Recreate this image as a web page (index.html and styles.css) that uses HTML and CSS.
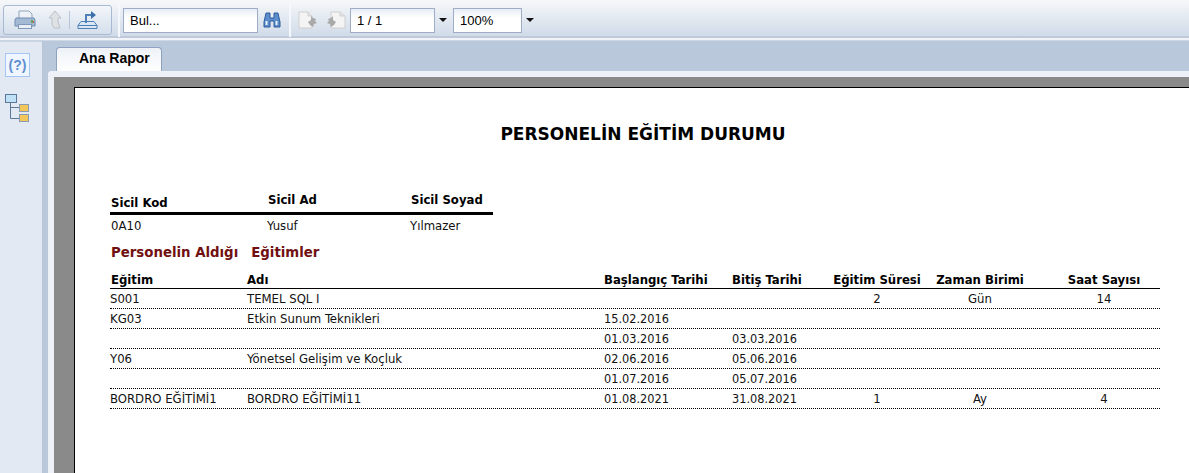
FILE: index.html
```html
<!DOCTYPE html>
<html lang="tr">
<head>
  <meta charset="UTF-8">
  <title>Personelin Eğitim Durumu</title>
  <link rel="stylesheet" href="styles.css">
</head>
<body>
  <!-- Toolbar -->
  <div class="toolbar">
    <div class="btn-group">
      <svg class="print-icon" width="22" height="20" viewBox="0 0 22 20"><path d="M5 1h10l3 3v5H5z" fill="#eef2f7" stroke="#8ea4c0"/><path d="M2 8h18l1 2v6H1v-6z" fill="#a4b9d4" stroke="#6f8cb0"/><rect x="4.500" y="14.500" width="13" height="4" fill="#e9eef5" stroke="#7f97b8"/><rect x="17" y="10" width="2" height="3" fill="#6aa35a"/><rect x="19" y="11" width="1" height="2" fill="#c9604a"/></svg>
      <svg class="up-icon" width="14" height="20" viewBox="0 0 14 20"><path d="M7 1l6 7h-3v4l2 6H6l-2-4V8H1z" fill="#dfe2e5" stroke="#bcc1c7"/></svg>
      <span class="btn-sep"></span>
      <svg class="send-icon" width="21" height="20" viewBox="0 0 21 20"><path d="M1 18.500v-3l3-4h13l3 4v3z" fill="#dce7f4" stroke="#4d80b8"/><path d="M1 15.500h19" stroke="#4d80b8"/><path d="M9 13V5h6" fill="none" stroke="#4d80b8" stroke-width="2"/><path d="M14 1l5 4-5 4z" fill="#3a70aa"/></svg>
    </div>
    <span class="tool-sep"></span>
    <input class="tool-input find-input" type="text" value="Bul...">
    <svg class="binoculars" width="18" height="16" viewBox="0 0 18 16"><path d="M3 1h4v5h4V1h4l2 9v5h-6V9H7v6H1v-5z" fill="#5d8ccb" stroke="#2c5c9e"/><path d="M3.500 9v4M13.500 9v4" stroke="#e6f0fb" stroke-width="2"/></svg>
    <span class="tool-sep"></span>
    <svg class="page-icon" width="20" height="18" viewBox="0 0 20 18"><path d="M1 1h9l4 4v12H1z" fill="#f4f4f4" stroke="#cfcfcf"/><path d="M10 1v4h4" fill="#e4e4e4" stroke="#cfcfcf"/><path d="M13 5l2 2 3 1-1 2 2 2-3 1-1 3-3-2-2-3 3-2z" fill="#a9a9a9"/></svg>
    <svg class="page-icon prev-icon" width="20" height="18" viewBox="0 0 20 18"><path d="M5 1h9l5 4v12H5z" fill="#f4f4f4" stroke="#cfcfcf"/><path d="M14 1v4h5" fill="#e4e4e4" stroke="#cfcfcf"/><path d="M7 5L5 7 2 8l1 2-2 2 3 1 1 3 3-2 2-3-3-2z" fill="#a9a9a9"/></svg>
    <input class="tool-input page-input" type="text" value="1 / 1">
    <span class="caret"></span>
    <input class="tool-input zoom-input" type="text" value="100%">
    <span class="caret"></span>
  </div>

  <div class="main">
    <!-- Left icons -->
    <div class="sidebar">
      <div class="help-btn">(?)</div>
      <svg class="tree-icon" width="24" height="28" viewBox="0 0 24 28"><path d="M5.500 9v15.500h9M5.500 13.500h9" fill="none" stroke="#5b7898"/><rect x="0.500" y="0.500" width="11" height="8" fill="#bfe0f5" stroke="#5b7898"/><rect x="14.500" y="10.500" width="9" height="7" fill="#f3c65a" stroke="#8a9ab0"/><rect x="14.500" y="20.500" width="9" height="7" fill="#f3c65a" stroke="#8a9ab0"/></svg>
    </div>

    <div class="content">
      <div class="tabs"><div class="tab">Ana Rapor</div></div>
      <div class="viewer">
        <div class="page">
          <h1 class="report-title">PERSONELİN EĞİTİM DURUMU</h1>

          <div class="person">
            <div class="person-head">
              <span class="person-kod">Sicil Kod</span>
              <span class="person-ad">Sicil Ad</span>
              <span class="person-soyad">Sicil Soyad</span>
            </div>
            <div class="person-row">
              <span>0A10</span>
              <span>Yusuf</span>
              <span>Yılmazer</span>
            </div>
          </div>

          <h2 class="section-title"><span>Personelin Aldığı</span><span>Eğitimler</span></h2>

          <div class="grid head-row">
            <span class="first">Eğitim</span><span>Adı</span><span>Başlangıç Tarihi</span><span>Bitiş Tarihi</span>
            <span class="mid">Eğitim Süresi</span><span class="mid">Zaman Birimi</span><span class="mid">Saat Sayısı</span>
          </div>
          <div class="grid row">
            <span>S001</span><span>TEMEL SQL I</span><span></span><span></span>
            <span class="mid">2</span><span class="mid">Gün</span><span class="mid">14</span>
          </div>
          <div class="grid row">
            <span>KG03</span><span>Etkin Sunum Teknikleri</span><span>15.02.2016</span><span></span>
            <span></span><span></span><span></span>
          </div>
          <div class="grid row">
            <span></span><span></span><span>01.03.2016</span><span>03.03.2016</span>
            <span></span><span></span><span></span>
          </div>
          <div class="grid row">
            <span>Y06</span><span>Yönetsel Gelişim ve Koçluk</span><span>02.06.2016</span><span>05.06.2016</span>
            <span></span><span></span><span></span>
          </div>
          <div class="grid row">
            <span></span><span></span><span>01.07.2016</span><span>05.07.2016</span>
            <span></span><span></span><span></span>
          </div>
          <div class="grid row">
            <span>BORDRO EĞİTİMİ1</span><span>BORDRO EĞİTİMİ11</span><span>01.08.2021</span><span>31.08.2021</span>
            <span class="mid">1</span><span class="mid">Ay</span><span class="mid">4</span>
          </div>
        </div>
      </div>
    </div>
  </div>
</body>
</html>
```

FILE: styles.css
```css
* {
  box-sizing: border-box;
}

html, body {
  height: 100%;
}

body {
  margin: 0;
  overflow: hidden;
  display: flex;
  flex-direction: column;
  background: #e3e9f2;
  font-family: "DejaVu Sans Condensed", "DejaVu Sans", sans-serif;
  font-size: 13px;
  color: #111;
}

/* Toolbar */
.toolbar {
  height: 40px;
  flex: none;
  display: flex;
  align-items: center;
  padding: 3px 0 1px 3px;
  background: linear-gradient(#f6f7f9 0%, #f0f3f7 15%, #d0dbe9 95%, #bfc9da 95%);
  border-bottom: 2px solid #f0f3f8;
}

.btn-group {
  width: 109px;
  height: 30px;
  margin-right: 6px;
  display: flex;
  align-items: center;
  padding: 0 0 0 10px;
  border: 1px solid #a7b9d2;
  border-radius: 3px;
  background: linear-gradient(#f3f6fa, #d5dfec);
}

.up-icon {
  margin-left: 12px;
}

.btn-sep {
  width: 1px;
  height: 18px;
  margin-left: 7px;
  background: #b7c6da;
}

.send-icon {
  margin-left: 7px;
}

.tool-sep {
  width: 2px;
  height: 34px;
  background: #f4f7fb;
}

.tool-input {
  height: 25px;
  padding: 0 6px;
  border: 1px solid #9facc7;
  background: linear-gradient(#e8edf5, #fff 40%);
  font-family: "Liberation Sans", sans-serif;
  font-size: 13px;
  color: #000;
  outline: none;
}

.find-input {
  width: 135px;
  margin-left: 3px;
}

.binoculars {
  margin: 0 8px 0 5px;
}

.page-icon {
  margin-left: 7px;
}

.prev-icon {
  margin-left: 8px;
}

.page-input {
  width: 85px;
  margin-left: 4px;
}

.zoom-input {
  width: 69px;
}

.caret {
  width: 0;
  height: 0;
  margin: 0 6px 0 4px;
  border-left: 4px solid transparent;
  border-right: 4px solid transparent;
  border-top: 4px solid #111;
}

/* Main area */
.main {
  flex: 1;
  min-height: 0;
  display: flex;
}

.sidebar {
  width: 43px;
  flex: none;
  display: flex;
  flex-direction: column;
  align-items: flex-start;
  padding: 11px 0 0 5px;
  background: #e3e9f2;
  border-top: 2px solid #c9d5e5;
  border-right: 1px solid #b5c4d9;
}

.help-btn {
  width: 25px;
  height: 24px;
  line-height: 22px;
  text-align: center;
  border: 1px solid #a5c5f5;
  background: #f0f6ff;
  color: #5f8fd0;
  font-family: "Liberation Sans", sans-serif;
  font-size: 14px;
  font-weight: bold;
}

.tree-icon {
  margin-top: 17px;
}

.content {
  flex: 1;
  min-width: 0;
  display: flex;
  flex-direction: column;
  background: #bac8db;
}

.tabs {
  height: 31px;
  flex: none;
  padding: 6px 0 0 13px;
  border-top: 1px solid #cdd7e5;
}

.tab {
  width: 106px;
  height: 25px;
  padding: 2px 0 0 22px;
  border: 1px solid #8ea3c2;
  border-bottom: none;
  border-radius: 4px 4px 0 0;
  background: linear-gradient(#eef2f8, #fff);
  font-family: "Liberation Sans", sans-serif;
  font-size: 14px;
  font-weight: bold;
  color: #000;
}

.viewer {
  flex: 1;
  min-height: 0;
  margin-left: 5px;
  padding: 10px 0 0 20px;
  background: #8a8a8a;
  border-top: 6px solid #eef2f8;
  border-left: 6px solid #eef2f8;
  border-top-left-radius: 4px;
}

/* Report page */
.page {
  height: 100%;
  padding: 36px 29px 0 35px;
  background: #fff;
  border-top: 1px solid #000;
  border-left: 1px solid #000;
}

.report-title {
  margin: 0 0 48px 16px;
  text-align: center;
  font-family: "DejaVu Sans", sans-serif;
  font-size: 17px;
  line-height: 20px;
  font-weight: bold;
  color: #000;
}

.person {
  width: 383px;
}

.person-head {
  height: 23px;
  display: flex;
  border-bottom: 3px solid #000;
  font-weight: bold;
  color: #000;
}

.person-kod {
  width: 158px;
  padding: 3px 0 0 1px;
}

.person-ad {
  width: 143px;
}

.person-row {
  display: flex;
  height: 26px;
  padding-top: 3px;
}

.person-row span:nth-child(1) {
  width: 157px;
  padding-left: 1px;
}

.person-row span:nth-child(2) {
  width: 143px;
}

.section-title {
  margin: 0 0 8px;
  padding-left: 1px;
  display: flex;
  gap: 13px;
  height: 22px;
  font-size: 14.8px;
  line-height: 21px;
  font-weight: bold;
  color: #701010;
}

.grid {
  display: grid;
  grid-template-columns: 137px 357px 128px 86px 118px 88px 136px;
  width: 1050px;
  height: 20px;
  align-items: center;
}

.head-row {
  height: 18px;
  border-bottom: 1px solid #000;
  font-weight: bold;
  color: #000;
}

.row {
  border-bottom: 1px dotted #000;
}

.row span {
  padding-bottom: 1px;
}

.row span:nth-child(3),
.row span:nth-child(4) {
  font-size: 12.6px;
}

.first {
  padding-left: 1px;
}

.mid {
  text-align: center;
}

.mid:last-child {
  padding-left: 24px;
}
```
